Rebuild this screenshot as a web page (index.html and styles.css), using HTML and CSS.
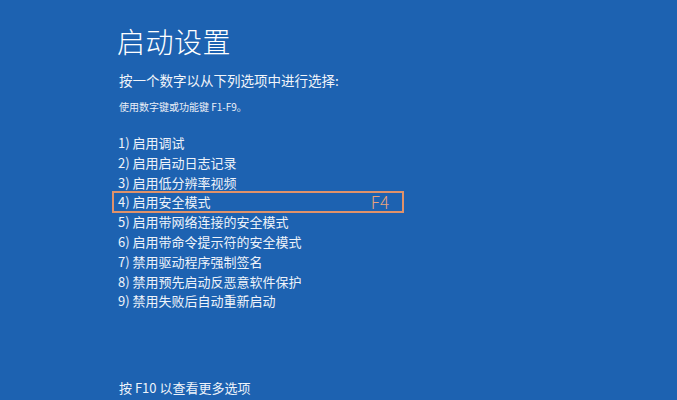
FILE: index.html
```html
<!DOCTYPE html>
<html lang="zh-CN">
<head>
<meta charset="utf-8">
<link rel="stylesheet" href="styles.css">
</head>
<body>
<div class="screen">
  <h1 class="title">启动设置</h1>
  <p class="prompt">按一个数字以从下列选项中进行选择:</p>
  <p class="hint">使用数字键或功能键 F1-F9。</p>
  <ul class="options">
    <li class="option">1) 启用调试</li>
    <li class="option">2) 启用启动日志记录</li>
    <li class="option">3) 启用低分辨率视频</li>
    <li class="option selected"><span>4) 启用安全模式</span><span class="key">F4</span></li>
    <li class="option">5) 启用带网络连接的安全模式</li>
    <li class="option">6) 启用带命令提示符的安全模式</li>
    <li class="option">7) 禁用驱动程序强制签名</li>
    <li class="option">8) 禁用预先启动反恶意软件保护</li>
    <li class="option">9) 禁用失败后自动重新启动</li>
  </ul>
  <p class="footer">按 F10 以查看更多选项</p>
</div>
</body>
</html>
```
FILE: styles.css
```css
html, body {
  margin: 0;
  padding: 0;
  width: 677px;
  height: 400px;
  overflow: hidden;
  background: #1d62b1;
}
.screen {
  box-sizing: border-box;
  height: 400px;
  padding: 22px 0 0 117px;
  color: #ffffff;
  font-family: "Noto Sans CJK SC", "Noto Sans", sans-serif;
  display: flex;
  flex-direction: column;
}
.title {
  margin: 0;
  font-size: 28px;
  font-weight: 300;
  line-height: 38px;
  letter-spacing: 0.5px;
}
.prompt {
  margin: 10px 0 0 2px;
  font-size: 13.5px;
  line-height: 20px;
  color: #f2f5fa;
}
.hint {
  margin: 10px 0 0 2px;
  font-size: 10px;
  line-height: 14px;
  color: #e9eef7;
}
.options {
  list-style: none;
  margin: 19px 0 0 0;
  padding: 0;
}
.option {
  box-sizing: border-box;
  width: 290px;
  height: 19.8px;
  line-height: 19.8px;
  font-size: 13px;
  padding-left: 5px;
  margin-left: -4px;
  color: #eef3fa;
  display: flex;
  justify-content: space-between;
  align-items: center;
}
.option.selected {
  outline: 2px solid #e0926a;
  outline-offset: -1px;
}
.key {
  color: #e8a27c;
  font-family: "Noto Sans CJK SC", "Noto Sans", sans-serif;
  font-weight: 300;
  font-size: 17px;
  padding-right: 14px;
}
.footer {
  margin: auto 0 2px 2px;
  font-size: 13px;
  line-height: 20px;
  color: #eef3fa;
}
```
